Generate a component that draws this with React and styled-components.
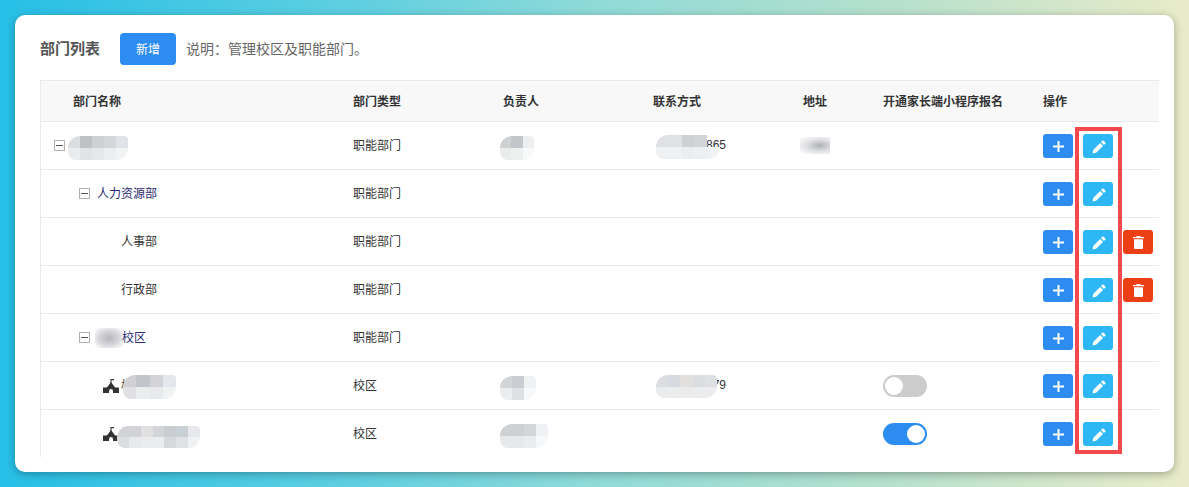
import React from 'react';
import styled, { createGlobalStyle } from 'styled-components';

const GlobalStyle = createGlobalStyle`
html,body{
    margin:0;
    padding:0;
}
body{
    font-family:"Noto Sans CJK SC","Liberation Sans",sans-serif;
}
`

const COLUMNS = [
    { title: '部门名称', width: 299 },
    { title: '部门类型', width: 150 },
    { title: '负责人', width: 150 },
    { title: '联系方式', width: 150 },
    { title: '地址', width: 80 },
    { title: '开通家长端小程序报名', width: 160 },
    { title: '操作', width: 129 },
];

const ROWS = [
    {
        level: 0, toggle: true, type: '职能部门',
        nameBlur: { width: 60, height: 24, cols: 5, left: 27, top: -1, colors: ['#dcdde0', '#bfc1c5', '#cfd0d4', '#d5d6da', '#e2e3e8', '#eaebed', '#e2e3e6', '#e6e7ea', '#eceef0', '#f2f3f5'] },
        ownerBlur: { width: 34, height: 24, cols: 3, left: -3, top: -10, colors: ['#ced0d2', '#c3c6c9', '#eceef0', '#eaecec', '#eef0f0', '#f8f9fb'] },
        phone: '865',
        phoneBlur: { width: 64, height: 24, cols: 5, left: 3, top: -2, colors: ['#dfe1e4', '#e0e1e4', '#ced0d3', '#d2d4d6', 'transparent', '#f0f1f2', '#eff0f1', '#ecedee', '#eeeff0', '#f1f2f3'] },
        address: true,
    },
    { level: 1, toggle: true, type: '职能部门', name: '人力资源部' },
    { level: 2, type: '职能部门', name: '人事部', canDelete: true },
    { level: 2, type: '职能部门', name: '行政部', canDelete: true },
    { level: 1, toggle: true, type: '职能部门', name: '校区', soft: true },
    {
        level: 2, school: true, type: '校区', name: '校',
        nameBlur: { width: 53, height: 24, cols: 4, left: 82, top: -1, colors: ['#d0d0d5', '#c3c5cc', '#d3d3d8', '#e4e7ed', '#e0e0e3', '#ebecee', '#e8e9eb', '#f0f2f4'] },
        ownerBlur: { width: 36, height: 24, cols: 3, left: -3, top: -10, colors: ['#d3d4d7', '#cccdd2', '#eff2f3', '#ecedee', '#dfe0e4', '#f6f8fa'] },
        phone: '79',
        phoneBlur: { width: 61, height: 23, cols: 5, left: 3, top: -2, colors: ['#dcdde1', '#d9dae1', '#e1e0df', '#dcdde1', '#dfe0e4', '#eaebed', '#eaecee', '#eaebed', '#eaecee', '#ededef'] },
        switchState: 'off',
    },
    {
        level: 2, school: true, type: '校区', name: '校',
        nameBlur: { width: 83, height: 22, cols: 7, left: 76, top: 2, colors: ['#d2d3d7', '#d2d3d7', '#e0e0e0', '#d3d4d8', '#c9ccd0', '#c9d0d6', '#e6e8ec', '#dcdde0', '#e8e9eb', '#ebecee', '#ebecee', '#d7d8dc', '#dfe1e4', '#f0f1f3'] },
        ownerBlur: { width: 48, height: 24, cols: 4, left: -3, top: -10, colors: ['#cfd0d4', '#cfd0d4', '#d4d5d9', '#f0f1f4', '#e7e8ea', '#e7e8ea', '#ebecee', '#f7f8f9'] },
        switchState: 'on',
    },
];

function Smudge({ blur }) {
    return (
        <SmudgeBox
            $left={blur.left}
            $top={blur.top}
            style={{ width: blur.width, height: blur.height, gridTemplateColumns: `repeat(${blur.cols},1fr)` }}
        >
            {blur.colors.map((color, i) => <span key={i} style={{ background: color }} />)}
        </SmudgeBox>
    );
}

function SchoolIcon() {
    return (
        <svg width="16" height="14" viewBox="0 0 16 14" fill="#333">
            <path d="M7.500 0h3.500v1.200H8.500V4h-1z" />
            <path d="M8 3L12.500 9h-9z" />
            <path d="M0 14V8.500h16V14h-6v-2a2 2 0 0 0-4 0v2z" />
        </svg>
    );
}

function PlusIcon() {
    return (
        <svg width="11" height="11" viewBox="0 0 11 11" fill="#fff">
            <rect x="4.500" y="0" width="2" height="11" />
            <rect x="0" y="4.500" width="11" height="2" />
        </svg>
    );
}

function PenIcon() {
    return (
        <svg width="14" height="14" viewBox="0 0 14 14" fill="#fff">
            <path d="M.5 13.500l.7-3.600 6.900-6.900 2.900 2.900-6.900 6.900z" />
            <path d="M9 2.100l1.300-1.300a1 1 0 0 1 1.400 0l1.500 1.500a1 1 0 0 1 0 1.400l-1.300 1.300z" />
        </svg>
    );
}

function TrashIcon() {
    return (
        <svg width="11" height="13" viewBox="0 0 11 13" fill="#fff">
            <path d="M3.500 0h4v1h3.500v1.300H0V1h3.500z" />
            <path d="M1 3.200h9V12a1 1 0 0 1-1 1H2a1 1 0 0 1-1-1z" />
        </svg>
    );
}

function NameCell({ row }) {
    return (
        <NameWrap $level={row.level} $school={row.school}>
            {row.toggle ? <ToggleBox /> : null}
            {row.school ? <SchoolIcon /> : null}
            {row.soft ? <SoftBlur /> : null}
            {row.name ? <NameText>{row.name}</NameText> : null}
            {row.nameBlur ? <Smudge blur={row.nameBlur} /> : null}
        </NameWrap>
    );
}

function App() {
    return (
        <Page>
            <GlobalStyle />
            <Card>
                <Toolbar>
                    <Title>部门列表</Title>
                    <AddButton>新增</AddButton>
                    <Hint>{'说明\uFF1A管理校区及职能部门。'}</Hint>
                </Toolbar>
                <TableWrap>
                    <Table>
                        <colgroup>
                            {COLUMNS.map((c) => <col key={c.title} style={{ width: c.width }} />)}
                        </colgroup>
                        <thead>
                            <tr>
                                {COLUMNS.map((c, i) => <Th key={c.title} $first={i === 0}>{c.title}</Th>)}
                            </tr>
                        </thead>
                        <tbody>
                            {ROWS.map((row, i) => (
                                <tr key={i}>
                                    <Td $edge><NameCell row={row} /></Td>
                                    <Td><TypeText>{row.type}</TypeText></Td>
                                    <Td>
                                        <CellAnchor>
                                            {row.ownerBlur ? <Smudge blur={row.ownerBlur} /> : null}
                                        </CellAnchor>
                                    </Td>
                                    <Td>
                                        {row.phone ? (
                                            <PhoneText>
                                                {row.phone}
                                                <Smudge blur={row.phoneBlur} />
                                            </PhoneText>
                                        ) : null}
                                    </Td>
                                    <Td>{row.address ? <AddressBlur /> : null}</Td>
                                    <Td>{row.switchState ? <Switch $on={row.switchState === 'on'} /> : null}</Td>
                                    <Td>
                                        <Actions>
                                            <IconButton $color="#2d8cf0"><PlusIcon /></IconButton>
                                            <IconButton $color="#2db7f5"><PenIcon /></IconButton>
                                            {row.canDelete ? <IconButton $color="#ed3f14"><TrashIcon /></IconButton> : null}
                                        </Actions>
                                    </Td>
                                </tr>
                            ))}
                        </tbody>
                    </Table>
                </TableWrap>
            </Card>
            <Highlight />
        </Page>
    );
}

export default App;

const Page = styled.div`
position:relative;
box-sizing:border-box;
width:1189px;
height:487px;
padding:15px;
overflow:hidden;
background:linear-gradient(90deg,#26bfe6 0%,#5fcfe0 30%,#8fdad8 50%,#b5e0cc 75%,#e9ebc8 100%);
`
const Card = styled.div`
box-sizing:border-box;
width:1159px;
height:457px;
padding:18px 15px 15px 25px;
background:#fff;
border-radius:10px;
box-shadow:0 2px 8px rgba(0,0,0,.3);
`
const Toolbar = styled.div`
display:flex;
align-items:center;
height:32px;
margin-bottom:15px;
`
const Title = styled.div`
width:80px;
padding-bottom:3px;
font-size:15px;
font-weight:700;
color:#555;
`
const AddButton = styled.button`
width:56px;
height:32px;
padding:0 0 2px;
border:0;
border-radius:4px;
background:#2d8cf0;
color:#fff;
font-family:inherit;
font-size:12px;
`
const Hint = styled.div`
margin-left:10px;
padding-bottom:3px;
font-size:14px;
color:#666;
`
const TableWrap = styled.div`
height:377px;
overflow:hidden;
border-left:1px solid #e8eaec;
`
const Table = styled.table`
width:1118px;
table-layout:fixed;
border-collapse:separate;
border-spacing:0;
font-size:12px;
color:#333;
`
const Th = styled.th`
box-sizing:border-box;
height:42px;
padding:0 0 2px ${(p) => (p.$first ? '32px' : '13px')};
background:#f8f8f9;
border-top:1px solid #e8eaec;
border-bottom:1px solid #e8eaec;
text-align:left;
font-weight:700;
color:#333;
`
const Td = styled.td`
box-sizing:border-box;
height:48px;
padding:0 0 0 ${(p) => (p.$edge ? '0' : '13px')};
border-bottom:1px solid #e8eaec;
`
const NameWrap = styled.div`
position:relative;
display:flex;
align-items:center;
min-height:18px;
gap:${(p) => (p.$school ? '2px' : '7px')};
padding-left:${(p) => (p.$school ? '62px' : p.$level === 2 ? '80px' : p.$level === 1 ? '38px' : '13px')};
color:${(p) => (p.$level === 1 ? '#2b2b6b' : '#333')};
`
const NameText = styled.span`
margin-bottom:2px;
`
const TypeText = styled.div`
margin-bottom:2px;
`
const ToggleBox = styled.span`
position:relative;
flex:none;
box-sizing:border-box;
width:11px;
height:11px;
border:1px solid #b5b0aa;
&::after{
    content:'';
    position:absolute;
    left:1px;
    right:1px;
    top:4px;
    height:1px;
    background:#555;
}
`
const SoftBlur = styled.span`
flex:none;
width:28px;
height:20px;
margin:0 -8px 0 -2px;
background:radial-gradient(ellipse at center,#b5b5bd 0%,#d5d5da 50%,#fff 95%);
`
const SmudgeBox = styled.span`
position:absolute;
left:${(p) => p.$left}px;
top:${(p) => p.$top}px;
display:grid;
border-radius:12px 4px 12px 8px;
overflow:hidden;
`
const CellAnchor = styled.div`
position:relative;
`
const PhoneText = styled.div`
position:relative;
width:73px;
height:17px;
line-height:17px;
text-align:right;
font-family:"Liberation Sans",sans-serif;
color:#333;
`
const AddressBlur = styled.div`
width:30px;
height:17px;
margin-left:-3px;
background:radial-gradient(ellipse at 65% 50%,#aeb0b4 0%,#dcdde0 45%,#fff 95%);
`
const Switch = styled.span`
position:relative;
display:block;
width:44px;
height:22px;
border-radius:11px;
background:${(p) => (p.$on ? '#2d8cf0' : '#ccc')};
&::after{
    content:'';
    position:absolute;
    top:2px;
    left:${(p) => (p.$on ? '24px' : '2px')};
    width:18px;
    height:18px;
    border-radius:50%;
    background:#fff;
}
`
const Actions = styled.div`
display:flex;
gap:10px;
`
const IconButton = styled.button`
flex:none;
display:flex;
align-items:center;
justify-content:center;
width:30px;
height:24px;
padding:2px 0 0 1px;
border:0;
border-radius:3px;
background:${(p) => p.$color};
`
const Highlight = styled.div`
position:absolute;
left:1075px;
top:127px;
box-sizing:border-box;
width:47px;
height:327px;
border:4px solid #f24a4c;
pointer-events:none;
`
